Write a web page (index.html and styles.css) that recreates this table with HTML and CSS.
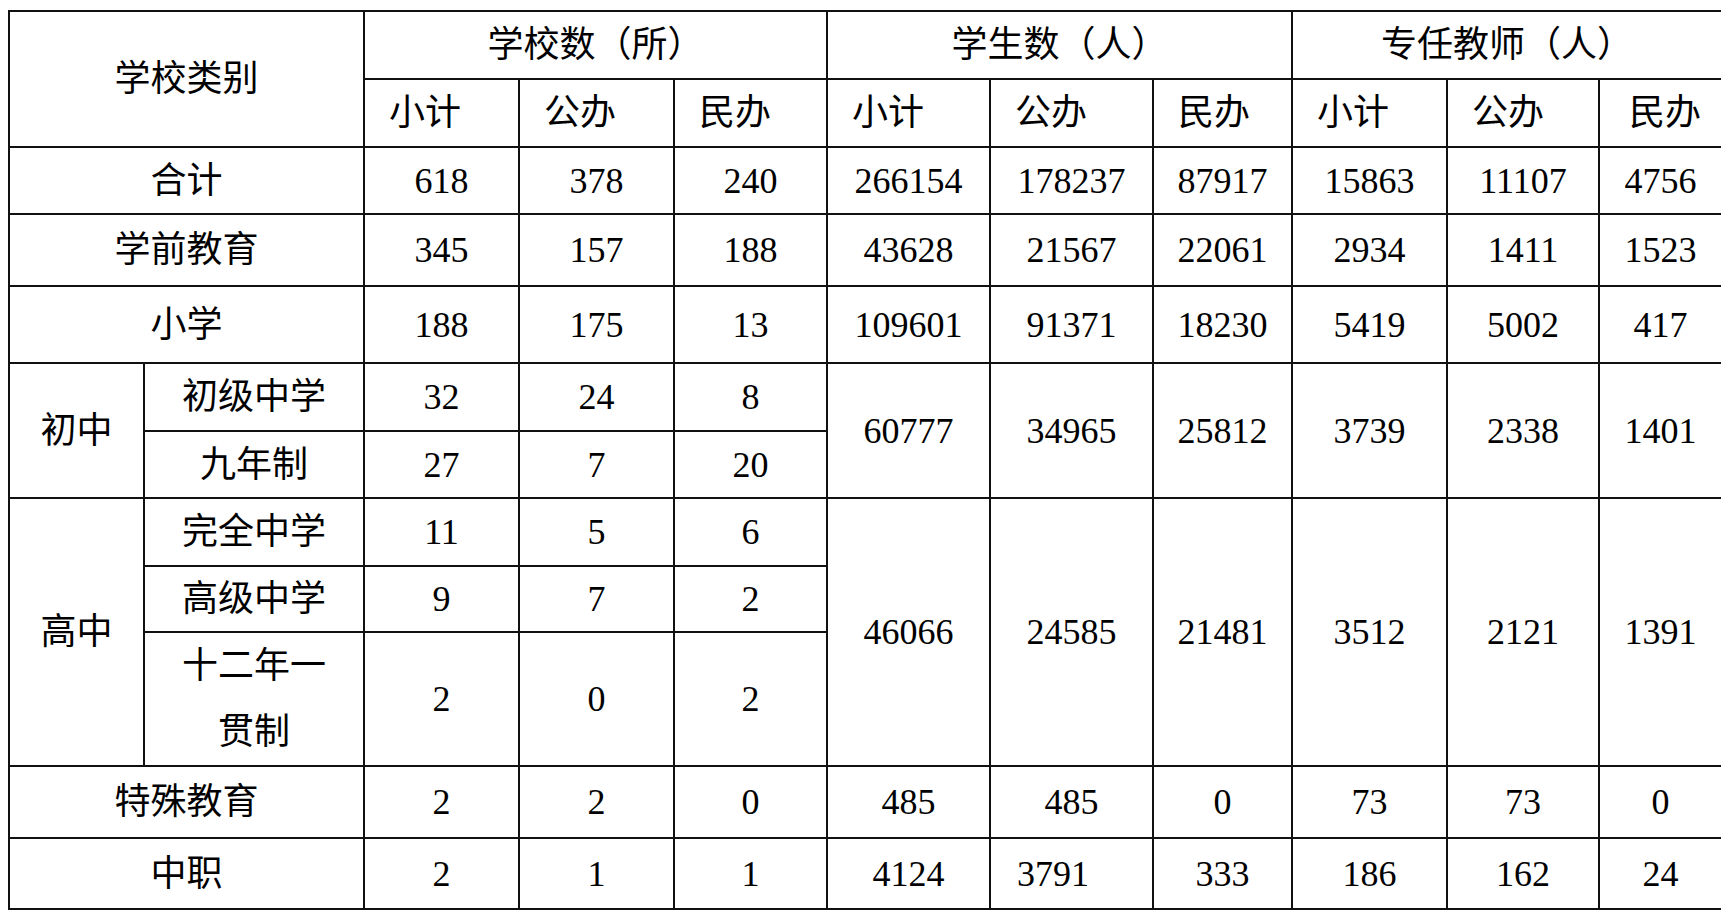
FILE: index.html
```html
<!DOCTYPE html>
<html lang="zh-CN">
<head>
<meta charset="utf-8">
<title>学校统计</title>
<link rel="stylesheet" href="styles.css">
</head>
<body>
<table class="stats">
  <colgroup>
    <col class="w-a"><col class="w-b">
    <col class="w-c"><col class="w-c"><col class="w-d">
    <col class="w-e"><col class="w-e"><col class="w-f">
    <col class="w-c"><col class="w-g"><col class="w-h">
  </colgroup>
  <tr class="h68">
    <th colspan="2" rowspan="2">学校类别</th>
    <th colspan="3">学校数（所）</th>
    <th colspan="3">学生数（人）</th>
    <th colspan="3">专任教师（人）</th>
  </tr>
  <tr class="h68">
    <th class="sub">小计</th><th class="sub">公办</th><th class="sub">民办</th>
    <th class="sub">小计</th><th class="sub">公办</th><th class="sub">民办</th>
    <th class="sub">小计</th><th class="sub">公办</th><th class="sub sub-last">民办</th>
  </tr>
  <tr class="h67">
    <td colspan="2">合计</td><td>618</td><td>378</td><td>240</td><td>266154</td><td>178237</td><td>87917</td><td>15863</td><td>11107</td><td>4756</td>
  </tr>
  <tr class="h72">
    <td colspan="2">学前教育</td><td>345</td><td>157</td><td>188</td><td>43628</td><td>21567</td><td>22061</td><td>2934</td><td>1411</td><td>1523</td>
  </tr>
  <tr class="h77">
    <td colspan="2">小学</td><td>188</td><td>175</td><td>13</td><td>109601</td><td>91371</td><td>18230</td><td>5419</td><td>5002</td><td>417</td>
  </tr>
  <tr class="h68">
    <td rowspan="2">初中</td><td>初级中学</td><td>32</td><td>24</td><td>8</td>
    <td rowspan="2">60777</td><td rowspan="2">34965</td><td rowspan="2">25812</td><td rowspan="2">3739</td><td rowspan="2">2338</td><td rowspan="2">1401</td>
  </tr>
  <tr class="h67">
    <td>九年制</td><td>27</td><td>7</td><td>20</td>
  </tr>
  <tr class="h68">
    <td rowspan="3">高中</td><td>完全中学</td><td>11</td><td>5</td><td>6</td>
    <td rowspan="3">46066</td><td rowspan="3">24585</td><td rowspan="3">21481</td><td rowspan="3">3512</td><td rowspan="3">2121</td><td rowspan="3">1391</td>
  </tr>
  <tr class="h66">
    <td>高级中学</td><td>9</td><td>7</td><td>2</td>
  </tr>
  <tr class="h133">
    <td class="two-line">十二年一<br>贯制</td><td>2</td><td>0</td><td>2</td>
  </tr>
  <tr class="h72">
    <td colspan="2">特殊教育</td><td>2</td><td>2</td><td>0</td><td>485</td><td>485</td><td>0</td><td>73</td><td>73</td><td>0</td>
  </tr>
  <tr class="h71">
    <td colspan="2">中职</td><td>2</td><td>1</td><td>1</td><td>4124</td><td class="shift-left">3791</td><td>333</td><td>186</td><td>162</td><td>24</td>
  </tr>
</table>
</body>
</html>
```

FILE: styles.css
```css
html, body {
  overflow: hidden;
  background: #ffffff;
}

body {
  margin: 10px 0 0 8px;
  font-family: "Liberation Serif", "Noto Sans CJK SC", serif;
  color: #000000;
}

.stats {
  border-collapse: collapse;
  table-layout: fixed;
  width: 1714px;
  font-size: 36px;
  font-weight: 400;
}

.w-a { width: 135px; }
.w-b { width: 220px; }
.w-c { width: 155px; }
.w-d { width: 153px; }
.w-e { width: 163px; }
.w-f { width: 139px; }
.w-g { width: 152px; }
.w-h { width: 123px; }

.stats th,
.stats td {
  border: 2px solid #111111;
  padding: 0;
  text-align: center;
  vertical-align: middle;
  font-weight: 400;
  line-height: 56px;
  white-space: nowrap;
}

.stats td.two-line {
  line-height: 66px;
}

.stats th.sub {
  text-align: left;
  padding-left: 24px;
}

.stats th.sub-last {
  padding-left: 29px;
}

.stats td.shift-left {
  text-align: left;
  padding-left: 26px;
}

.h66 { height: 66px; }
.h67 { height: 67px; }
.h68 { height: 68px; }
.h71 { height: 71px; }
.h72 { height: 72px; }
.h77 { height: 77px; }
.h133 { height: 133px; }
```
